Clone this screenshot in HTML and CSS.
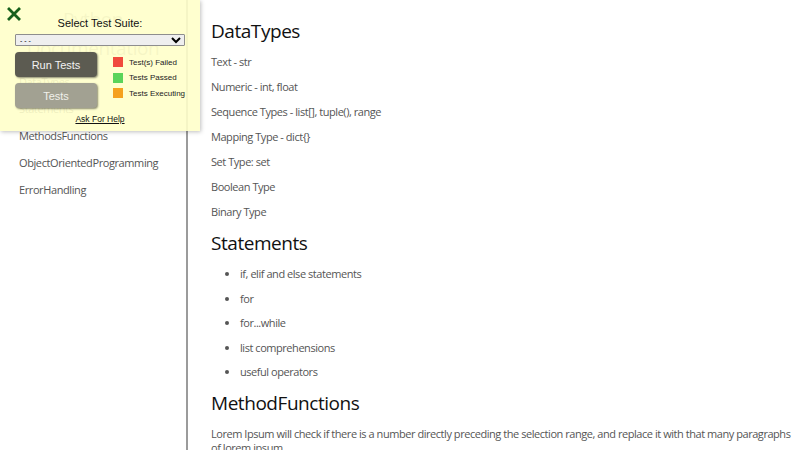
FILE: index.html
```html
<!DOCTYPE html>
<html lang="en">
<head>
    <meta charset="UTF-8">
    <meta name="viewport" content="width=device-width, initial-scale=1.0">
    <title>Python Documentation</title>
    <link rel="stylesheet" href="styles.css">
</head>
<body>
    <div class="page">
        <aside class="sidebar">
            <div class="site-title">Python<br>Documentation</div>
            <nav class="nav">
                <a href="#datatypes">DataTypes</a>
                <a href="#statements">Statements</a>
                <a href="#methods">MethodsFunctions</a>
                <a href="#oop">ObjectOrientedProgramming</a>
                <a href="#errors">ErrorHandling</a>
            </nav>
        </aside>

        <main class="content">
            <h1 id="datatypes">DataTypes</h1>
            <p>Text - str</p>
            <p>Numeric - int, float</p>
            <p>Sequence Types - list[], tuple(), range</p>
            <p>Mapping Type - dict{}</p>
            <p>Set Type: set</p>
            <p>Boolean Type</p>
            <p>Binary Type</p>

            <h2 id="statements">Statements</h2>
            <ul>
                <li>if, elif and else statements</li>
                <li>for</li>
                <li>for...while</li>
                <li>list comprehensions</li>
                <li>useful operators</li>
            </ul>

            <h2 id="methods">MethodFunctions</h2>
            <p>Lorem Ipsum will check if there is a number directly preceding the selection range, and replace it with that many paragraphs of lorem ipsum.</p>
        </main>
    </div>

    <!-- test runner panel, sits over the sidebar -->
    <div class="test-panel">
        <div class="panel-top">
            <button class="close-btn" title="Close">
                <svg width="14" height="14" viewBox="0 0 14 14">
                    <path d="M2 2 L12 12 M12 2 L2 12" stroke="#17601c" stroke-width="2.8" stroke-linecap="square" fill="none"/>
                </svg>
            </button>
            <div class="panel-label">Select Test Suite:</div>
        </div>
        <select class="suite-select">
            <option>- - -</option>
        </select>
        <div class="panel-body">
            <div class="panel-buttons">
                <button class="btn btn-run">Run Tests</button>
                <button class="btn btn-tests">Tests</button>
            </div>
            <div class="legend">
                <div class="legend-row"><span class="swatch failed"></span>Test(s) Failed</div>
                <div class="legend-row"><span class="swatch passed"></span>Tests Passed</div>
                <div class="legend-row"><span class="swatch running"></span>Tests Executing</div>
            </div>
        </div>
        <a class="help-link" href="#">Ask For Help</a>
    </div>
</body>
</html>
```

FILE: styles.css
```css
body {
    margin: 0;
    background-color: #fff;
    font-family: 'Open Sans', 'Liberation Sans', sans-serif;
    color: #555;
}

.page {
    display: flex;
    min-height: 100vh;
}

/* left navigation */
.sidebar {
    width: 186px;
    flex-shrink: 0;
    border-right: 2px solid #9b9b9b;
    padding-top: 5px;
}

.site-title {
    text-align: center;
    font-size: 19px;
    line-height: 29px;
    letter-spacing: -0.4px;
    color: #9c9c9c;
}

.nav {
    display: flex;
    flex-direction: column;
    gap: 13px;
    padding: 12px 0 0 19px;
}

.nav a {
    color: #555;
    text-decoration: none;
    font-size: 11px;
    line-height: 14px;
    letter-spacing: -0.4px;
}

/* main text */
.content {
    flex: 1;
    padding: 19px 8px 0 23px;
}

.content h1,
.content h2 {
    margin: 12px 0;
    font-size: 19px;
    line-height: 24px;
    font-weight: normal;
    letter-spacing: -0.45px;
    color: #111;
}

.content h1 {
    margin-top: 0;
}

.content p,
.content li {
    font-size: 11px;
    line-height: 14px;
    letter-spacing: -0.45px;
}

.content p {
    margin: 11px 0;
}

.content ul {
    margin: 11px 0;
    padding-left: 29px;
}

.content li + li {
    margin-top: 10.5px;
}

/* test runner overlay */
.test-panel {
    position: absolute;
    top: 0;
    left: 0;
    width: 200px;
    height: 131px;
    box-sizing: border-box;
    padding: 6px 15px 0 15px;
    background-color: rgba(255, 255, 202, 0.9);
    box-shadow: 1px 1px 4px rgba(0, 0, 0, 0.25);
    font-family: 'Liberation Sans', Arial, sans-serif;
    color: #111;
    display: flex;
    flex-direction: column;
}

.panel-top {
    position: relative;
    height: 22px;
}

.close-btn {
    position: absolute;
    left: -8px;
    top: 1px;
    padding: 0;
    border: none;
    background: none;
    line-height: 0;
}

.panel-label {
    text-align: center;
    font-size: 11px;
    padding-top: 11px;
}

.suite-select {
    margin-top: 6px;
    width: 170px;
    height: 12px;
    font-size: 7px;
    padding: 0;
    background-color: #efefef;
    border: 1px solid #8e8e8e;
    border-radius: 1px;
}

.panel-body {
    display: flex;
    gap: 16px;
    margin-top: 6px;
}

.panel-buttons {
    display: flex;
    flex-direction: column;
    gap: 6px;
}

.btn {
    width: 82px;
    height: 25px;
    border: none;
    border-radius: 4px;
    font-family: 'Liberation Sans', Arial, sans-serif;
    font-size: 11px;
    box-shadow: 1px 1px 2px rgba(0, 0, 0, 0.45);
}

.btn-run {
    background-color: #5c5b51;
    color: #f2f2f2;
}

.btn-tests {
    background-color: #a2a192;
    color: #f0f0ea;
}

.legend {
    display: flex;
    flex-direction: column;
    gap: 5.5px;
    padding-top: 5px;
    font-size: 8px;
    color: #222;
    white-space: nowrap;
}

.legend-row {
    display: flex;
    align-items: center;
    gap: 6px;
    height: 10px;
}

.swatch {
    width: 10px;
    height: 10px;
    flex-shrink: 0;
}

.swatch.failed { background-color: #f04a3d; }
.swatch.passed { background-color: #5ad45a; }
.swatch.running { background-color: #f5a11f; }

.help-link {
    margin-top: 6px;
    text-align: center;
    font-size: 8.5px;
    color: #111;
    text-decoration: underline;
}
```
